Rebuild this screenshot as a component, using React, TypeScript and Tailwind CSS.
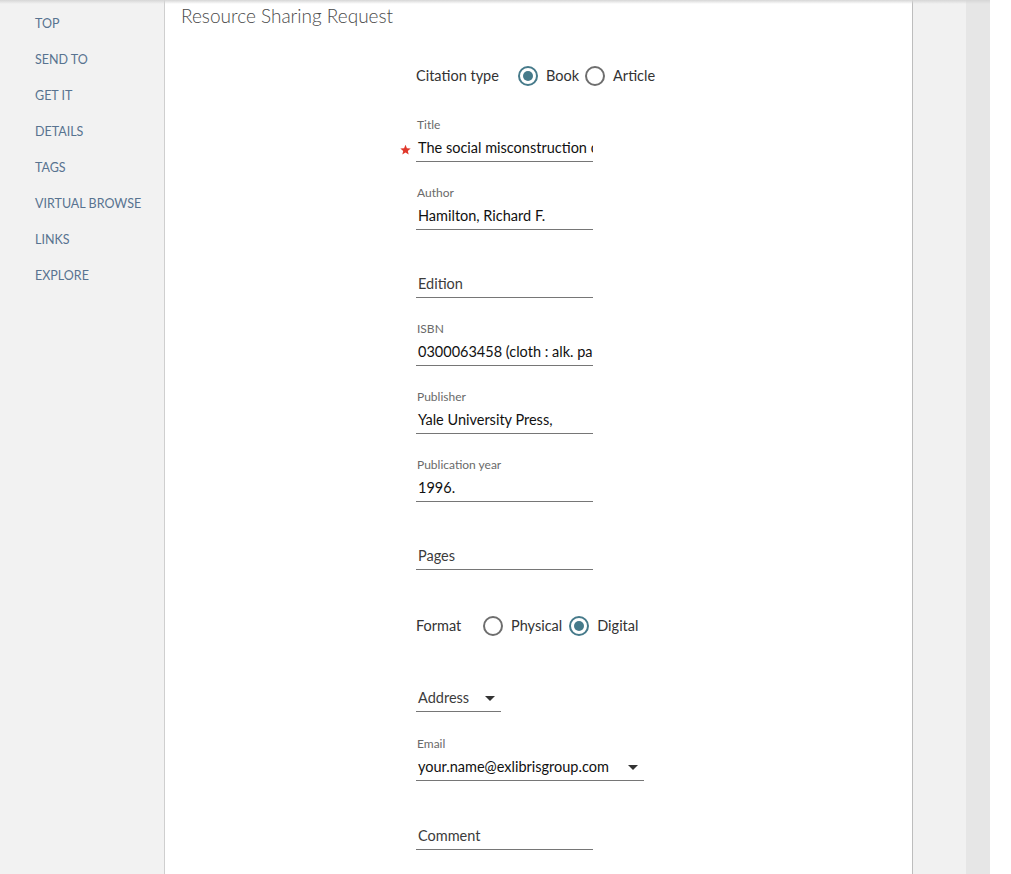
import React from "react";

const font = { fontFamily: "Lato, 'Open Sans', sans-serif" };

function Radio({ checked }: { checked: boolean }) {
  return checked ? (
    <span className="flex h-[20px] w-[20px] items-center justify-center rounded-full border-2 border-[#467a8a]">
      <span className="h-[10px] w-[10px] rounded-full bg-[#467a8a]" />
    </span>
  ) : (
    <span className="h-[20px] w-[20px] rounded-full border-2 border-[#6e6e6e]" />
  );
}

function Field({
  label,
  value,
  placeholder,
  required,
  width = "w-[177px]",
  select,
  mt = "mt-[23px]",
}: {
  label?: string;
  value?: string;
  placeholder?: string;
  required?: boolean;
  width?: string;
  select?: boolean;
  mt?: string;
}) {
  return (
    <div className={`relative ${mt} ${width}`}>
      <div className="h-[16px] pl-[1px] text-[12px] leading-[16px] text-[#6a6a6a]">{label ?? ""}</div>
      {required && (
        <svg className="absolute left-[-16px] top-[27px]" width="11" height="11" viewBox="0 0 24 24">
          <path d="M12 1.5l3.1 7.6 8.2.6-6.3 5.3 2 8-7-4.4-7 4.4 2-8L.7 9.7l8.2-.6z" fill="#e0382b" />
        </svg>
      )}
      <div className="mt-[5px] flex items-center border-b border-[#767676] pb-[3px]">
        <div
          className={`h-[20px] flex-1 overflow-hidden whitespace-nowrap pl-[2px] text-[14.5px] leading-[20px] ${
            value ? "text-[#111]" : "text-[#3c3c3c]"
          }`}
        >
          {value ?? placeholder}
        </div>
        {select && (
          <svg className="mr-[6px]" width="10" height="5" viewBox="0 0 10 5">
            <path d="M0 0h10L5 5z" fill="#333" />
          </svg>
        )}
      </div>
    </div>
  );
}

export default function App() {
  const nav = ["TOP", "SEND TO", "GET IT", "DETAILS", "TAGS", "VIRTUAL BROWSE", "LINKS", "EXPLORE"];
  return (
    <div className="relative flex h-[874px] w-full overflow-hidden bg-white" style={font}>
      <div className="pointer-events-none absolute left-0 right-[21px] top-0 h-[4px] bg-gradient-to-b from-[#d6d6d6] to-transparent" />
      <aside className="w-[165px] shrink-0 border-r border-[#cfcfcf] bg-[#f2f2f2] pt-[15px]">
        <ul className="flex flex-col">
          {nav.map((n) => (
            <li key={n} className="h-[36px] pl-[35px] text-[12.5px] leading-[18px] text-[#587390]">
              {n}
            </li>
          ))}
        </ul>
      </aside>
      <main className="w-[747px] shrink-0 bg-white">
        <h1 className="pl-[16px] pt-[3px] text-[19px] font-light leading-[26px] text-[#4a4a4a]">
          Resource Sharing Request
        </h1>
        <div className="ml-[251px] mt-[35px] flex flex-col">
          <div className="flex h-[24px] items-center text-[14.5px] text-[#333]">
            <span className="w-[102px]">Citation type</span>
            <Radio checked />
            <span className="ml-[8px] mr-[6px]">Book</span>
            <Radio checked={false} />
            <span className="ml-[8px]">Article</span>
          </div>
          <Field mt="mt-[29px]" label="Title" value="The social misconstruction of reality" required />
          <Field label="Author" value="Hamilton, Richard F." />
          <Field placeholder="Edition" />
          <Field label="ISBN" value="0300063458 (cloth : alk. paper)" />
          <Field label="Publisher" value="Yale University Press," />
          <Field label="Publication year" value="1996." />
          <Field placeholder="Pages" />
          <div className="mt-[44px] flex h-[24px] items-center text-[14.5px] text-[#333]">
            <span className="w-[67px]">Format</span>
            <Radio checked={false} />
            <span className="ml-[8px] mr-[7px]">Physical</span>
            <Radio checked />
            <span className="ml-[8px]">Digital</span>
          </div>
          <Field mt="mt-[29px]" placeholder="Address" width="w-[85px]" select />
          <Field mt="mt-[24px]" label="Email" value="your.name@exlibrisgroup.com" width="w-[228px]" select />
          <Field mt="mt-[24px]" placeholder="Comment" />
        </div>
      </main>
      <div className="w-[54px] shrink-0 border-l border-[#bdbdbd] bg-[#f1f1f1]" />
      <div className="w-[24px] shrink-0 bg-[#e6e6e6]" />
      <div className="flex-1 bg-white" />
    </div>
  );
}
